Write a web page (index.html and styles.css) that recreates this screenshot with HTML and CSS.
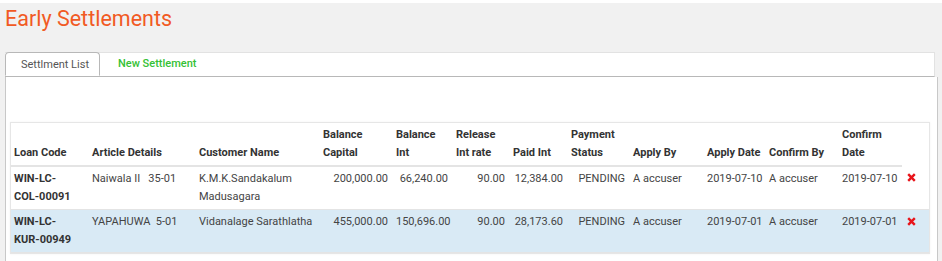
FILE: index.html
```html
<!DOCTYPE html>
<html lang="en">
<head>
    <meta charset="UTF-8">
    <title>Early Settlements</title>
    <link rel="stylesheet" href="styles.css">
</head>
<body>

    <div class="page">
        <h1 class="page-title">Early Settlements</h1>

        <div class="tabs">
            <ul class="tab-nav">
                <li class="tab active">Settlment List</li>
                <li class="tab tab-link">New Settlement</li>
            </ul>

            <div class="tab-body">
                <div class="table-box">
                    <table class="settlements">
                        <colgroup>
                            <col style="width:78px">
                            <col style="width:107px">
                            <col style="width:124px">
                            <col style="width:73px">
                            <col style="width:60px">
                            <col style="width:57px">
                            <col style="width:58px">
                            <col style="width:62px">
                            <col style="width:74px">
                            <col style="width:62px">
                            <col style="width:73px">
                            <col style="width:63px">
                            <col>
                        </colgroup>
                        <thead>
                            <tr>
                                <th>Loan Code</th>
                                <th>Article Details</th>
                                <th>Customer Name</th>
                                <th>Balance<br>Capital</th>
                                <th>Balance<br>Int</th>
                                <th>Release<br>Int rate</th>
                                <th>Paid Int</th>
                                <th>Payment<br>Status</th>
                                <th>Apply By</th>
                                <th>Apply Date</th>
                                <th>Confirm By</th>
                                <th>Confirm<br>Date</th>
                                <th class="no-line"></th>
                            </tr>
                        </thead>
                        <tbody>
                            <tr>
                                <td class="code">WIN-LC-<br>COL-00091</td>
                                <td>Naiwala II &nbsp; 35-01</td>
                                <td>K.M.K.Sandakalum<br>Madusagara</td>
                                <td class="num">200,000.00</td>
                                <td class="num">66,240.00</td>
                                <td class="num">90.00</td>
                                <td class="num">12,384.00</td>
                                <td class="num">PENDING</td>
                                <td>A accuser</td>
                                <td>2019-07-10</td>
                                <td>A accuser</td>
                                <td>2019-07-10</td>
                                <td class="action"><svg class="remove" width="9" height="9" viewBox="0 0 9 9"><path d="M1.2 1.2L7.8 7.8M7.8 1.2L1.2 7.8"/></svg></td>
                            </tr>
                            <tr class="selected">
                                <td class="code">WIN-LC-<br>KUR-00949</td>
                                <td>YAPAHUWA &nbsp;5-01</td>
                                <td>Vidanalage Sarathlatha</td>
                                <td class="num">455,000.00</td>
                                <td class="num">150,696.00</td>
                                <td class="num">90.00</td>
                                <td class="num">28,173.60</td>
                                <td class="num">PENDING</td>
                                <td>A accuser</td>
                                <td>2019-07-01</td>
                                <td>A accuser</td>
                                <td>2019-07-01</td>
                                <td class="action"><svg class="remove" width="9" height="9" viewBox="0 0 9 9"><path d="M1.2 1.2L7.8 7.8M7.8 1.2L1.2 7.8"/></svg></td>
                            </tr>
                        </tbody>
                    </table>
                </div>
            </div>
        </div>
    </div>

</body>
</html>
```

FILE: styles.css
```css
/* Fond de page */
html {
    background: #fff;
}

body {
    margin: 0;
    padding-top: 3px;
    font-family: 'Roboto', 'Liberation Sans', sans-serif;
    font-size: 11px;
    color: #444;
}

.page {
    background: #f1f1f1;
    height: 258px;
    overflow: hidden;
}

/* Titre */
.page-title {
    margin: 0 0 19px;
    padding: 2px 0 0 5px;
    font-size: 21.5px;
    line-height: 28px;
    font-weight: 400;
    color: #f15a24;
}

/* Onglets */
.tabs {
    margin-left: 5px;
    width: 933px;
}

.tab-nav {
    list-style: none;
    margin: 0;
    padding: 0;
    width: 929px;
    height: 23px;
    display: flex;
    background: #fff;
    border-top: 1px solid #e2e2e2;
    border-right: 1px solid #e2e2e2;
    border-bottom: 1px solid #b8b8b8;
}

.tab {
    height: 24px;
    margin-top: -1px;
    line-height: 24px;
    font-size: 11px;
    text-align: center;
}

.tab.active {
    width: 92px;
    padding-left: 5px;
    box-sizing: border-box;
    width: 95px;
    border: 1px solid #b8b8b8;
    border-bottom-color: #fff;
    border-radius: 4px 4px 0 0;
    background: #fff;
    color: #555;
}

.tab-link {
    margin-left: 18px;
    color: #35c135;
    font-weight: 500;
}

/* Contenu de l'onglet */
.tab-body {
    background: #fff;
    border-left: 1px solid #c8c8c8;
    border-right: 1px solid #c8c8c8;
    padding: 45px 0 0 4px;
    height: 200px;
    box-sizing: border-box;
}

.table-box {
    width: 918px;
    border: 1px solid #e6e6e6;
    box-shadow: 0 0 2px rgba(0, 0, 0, 0.06);
    background: #fff;
}

/* Tableau */
.settlements {
    width: 100%;
    border-collapse: collapse;
    table-layout: fixed;
}

.settlements th,
.settlements td {
    padding: 3px 5px 3px 3px;
    line-height: 18px;
    text-align: left;
    white-space: nowrap;
}

.settlements th {
    vertical-align: bottom;
    font-weight: 700;
    color: #333;
    border-bottom: 2px solid #e4e4e4;
}

.settlements th.no-line {
    border-bottom: none;
}

.settlements td {
    vertical-align: top;
    border-bottom: 1px solid #e4e4e4;
}

.settlements td.code {
    font-weight: 700;
    color: #333;
}

.settlements td.num {
    text-align: right;
}

.settlements td.action {
    padding-left: 5px;
    padding-top: 7px;
}

.settlements tr.selected td {
    background: #d9eaf5;
}

.remove {
    display: block;
}

.remove path {
    stroke: #e8141a;
    stroke-width: 2.4;
    stroke-linecap: butt;
    fill: none;
}
```
